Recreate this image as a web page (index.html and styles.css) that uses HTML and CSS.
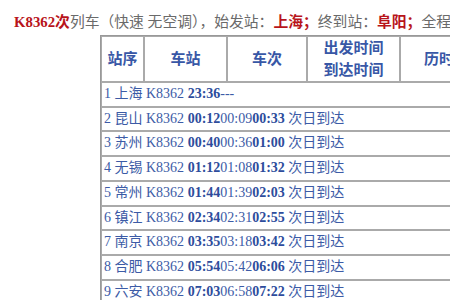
FILE: index.html
```html
<!DOCTYPE html>
<html lang="zh-CN">
<head>
<meta charset="utf-8">
<title>K8362次列车</title>
<link rel="stylesheet" href="styles.css">
</head>
<body>
<div class="page">
  <p class="title"><b class="red">K8362次</b>列车（快速 无空调），始发站：<b class="red">上海；</b>终到站：<b class="red">阜阳；</b>全程</p>
  <table class="timetable">
    <tr class="head">
      <td class="c1">站序</td>
      <td class="c2">车站</td>
      <td class="c3">车次</td>
      <td class="c4">出发时间<br>到达时间</td>
      <td class="c5">历时</td>
    </tr>
    <tr><td colspan="5">1 上海 K8362 <b>23:36</b>---</td></tr>
    <tr><td colspan="5">2 昆山 K8362 <b>00:12</b>00:09<b>00:33</b> 次日到达</td></tr>
    <tr><td colspan="5">3 苏州 K8362 <b>00:40</b>00:36<b>01:00</b> 次日到达</td></tr>
    <tr><td colspan="5">4 无锡 K8362 <b>01:12</b>01:08<b>01:32</b> 次日到达</td></tr>
    <tr><td colspan="5">5 常州 K8362 <b>01:44</b>01:39<b>02:03</b> 次日到达</td></tr>
    <tr><td colspan="5">6 镇江 K8362 <b>02:34</b>02:31<b>02:55</b> 次日到达</td></tr>
    <tr><td colspan="5">7 南京 K8362 <b>03:35</b>03:18<b>03:42</b> 次日到达</td></tr>
    <tr><td colspan="5">8 合肥 K8362 <b>05:54</b>05:42<b>06:06</b> 次日到达</td></tr>
    <tr><td colspan="5">9 六安 K8362 <b>07:03</b>06:58<b>07:22</b> 次日到达</td></tr>
  </table>
</div>
</body>
</html>
```

FILE: styles.css
```css
html, body {
  margin: 0;
  padding: 0;
  background: #fff;
  overflow: hidden;
}
.page {
  width: 450px;
  height: 300px;
  overflow: hidden;
  font-family: "Liberation Serif", "Noto Sans CJK SC", serif;
}
.title {
  margin: 0;
  padding: 12px 0 0 14px;
  height: 23px;
  line-height: 20px;
  font-size: 14.8px;
  color: #6a6a6a;
  white-space: nowrap;
}
.red {
  color: #b8141a;
}
.timetable {
  margin-left: 100px;
  width: 379px;
  table-layout: fixed;
  border: 1px solid #999;
  border-spacing: 0;
  border-collapse: separate;
  color: #3c5ba6;
}
.timetable td {
  border: 1px solid #aaa;
  padding: 0 0 0 2px;
  font-size: 14px;
  line-height: 22.7px;
  white-space: nowrap;
  text-align: left;
  overflow: visible;
}
.timetable b {
  color: #2d4c9c;
}
.head td {
  height: 44px;
  padding: 0;
  text-align: center;
  font-weight: bold;
  font-size: 15px;
  line-height: 22px;
  color: #3857a6;
}
.c1 { width: 41px; }
.c2 { width: 81px; }
.c3 { width: 78px; }
.c4 { width: 91px; }
.c5 { width: 76px; }
```
